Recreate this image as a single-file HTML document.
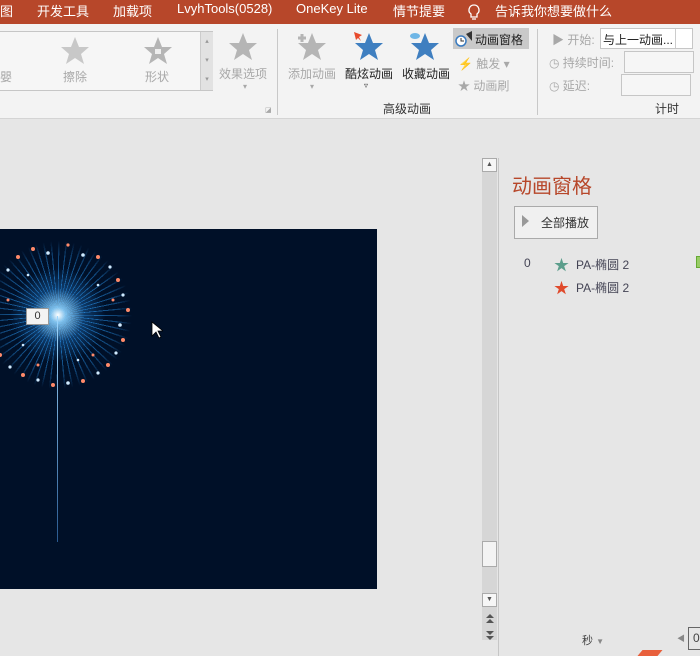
<!DOCTYPE html>
<html><head><meta charset="utf-8"><style>
*{margin:0;padding:0;box-sizing:border-box}
body{width:700px;height:656px;overflow:hidden;background:#e6e6e6;font-family:"Liberation Sans","Noto Sans CJK SC",sans-serif;position:relative;font-size:12px;color:#444}
.a{position:absolute;white-space:nowrap}
#top{position:absolute;left:0;top:0;width:700px;height:24px;background:#b7472a;color:#fff;font-size:13px}
#rib{position:absolute;left:0;top:24px;width:700px;height:95px;background:#f3f3f3;border-bottom:1px solid #d4d4d4}
.g{color:#a8a8a8}
.star{position:absolute;width:30px;height:30px}
.lbl{font-size:12px}
</style></head><body>
<div id="top">
<span class="a" style="left:0;top:1px">图</span>
<span class="a" style="left:37px;top:1px">开发工具</span>
<span class="a" style="left:113px;top:1px">加载项</span>
<span class="a" style="left:177px;top:1px">LvyhTools(0528)</span>
<span class="a" style="left:296px;top:1px">OneKey Lite</span>
<span class="a" style="left:393px;top:1px">情节提要</span>
<svg class="a" style="left:467px;top:3px" width="14" height="18"><path d="M7 2a5 5 0 0 0-3 9v3h6v-3a5 5 0 0 0-3-9z M5 16h4" stroke="#fff" fill="none" stroke-width="1.3"/></svg>
<span class="a" style="left:495px;top:1px">告诉我你想要做什么</span>
</div>
<div id="rib">
<div class="a" style="left:-2px;top:7px;width:215px;height:60px;border:1px solid #c6c6c6;background:#f6f6f6"></div>
<div class="a" style="left:200px;top:8px;width:13px;height:58px;background:#e2e2e2;border-left:1px solid #ccc;font-size:7px;color:#999;text-align:center;line-height:19px">▴<br>▾<br>▾</div>
<svg class="star" style="left:60px;top:12px" viewBox="0 0 30 30"><path d="M15 1l4 10h10l-8 7 3 10-9-6-9 6 3-10-8-7h10z" fill="#c8c8c8"/></svg>
<svg class="star" style="left:143px;top:12px" viewBox="0 0 30 30"><path d="M15 1l4 10h10l-8 7 3 10-9-6-9 6 3-10-8-7h10z" fill="#b5b5b5"/><rect x="12" y="13" width="6" height="5" fill="#eee"/></svg>
<svg class="star" style="left:228px;top:8px" viewBox="0 0 30 30"><path d="M15 1l4 10h10l-8 7 3 10-9-6-9 6 3-10-8-7h10z" fill="#b5b5b5"/></svg>
<span class="a lbl g" style="left:0;top:44px">嬰</span>
<span class="a lbl g" style="left:63px;top:44px">擦除</span>
<span class="a lbl g" style="left:145px;top:44px">形状</span>
<span class="a lbl g" style="left:219px;top:41px">效果选项</span>
<span class="a g" style="left:243px;top:58px;font-size:8px">▾</span>
<div class="a" style="left:277px;top:5px;width:1px;height:86px;background:#c8c8c8"></div>
<svg class="star" style="left:297px;top:8px" viewBox="0 0 30 30"><path d="M15 1l4 10h10l-8 7 3 10-9-6-9 6 3-10-8-7h10z" fill="#b5b5b5"/><path d="M2 2v8M-2 6h8" stroke="#b5b5b5" stroke-width="3" transform="translate(3,0)"/></svg>
<span class="a lbl g" style="left:288px;top:41px">添加动画</span>
<span class="a g" style="left:310px;top:58px;font-size:8px">▾</span>
<svg class="star" style="left:354px;top:8px" viewBox="0 0 30 30"><path d="M15 1l4 10h10l-8 7 3 10-9-6-9 6 3-10-8-7h10z" fill="#3f7fc0"/><path d="M0 0l8 3-3 2 2 4-3-3-2 2z" fill="#e84a2c"/></svg>
<span class="a lbl" style="left:345px;top:41px;color:#222">酷炫动画</span>
<span class="a" style="left:364px;top:57px;font-size:8px;color:#333">▿</span>
<svg class="star" style="left:410px;top:8px" viewBox="0 0 30 30"><path d="M15 1l4 10h10l-8 7 3 10-9-6-9 6 3-10-8-7h10z" fill="#3f7fc0"/><ellipse cx="5" cy="4" rx="5" ry="3" fill="#6fb6e6"/></svg>
<span class="a lbl" style="left:402px;top:41px;color:#222">收藏动画</span>
<div class="a" style="left:453px;top:4px;width:76px;height:21px;background:#c9c9c9"></div>
<svg class="a" style="left:455px;top:6px" width="18" height="17"><circle cx="6" cy="11" r="5" stroke="#3a7bbf" fill="#fff" stroke-width="1.5"/><path d="M6 8v3h3" stroke="#333" fill="none"/><path d="M11 4l6-3v10z" fill="#333"/></svg>
<span class="a lbl" style="left:475px;top:7px;color:#222">动画窗格</span>
<span class="a lbl g" style="left:458px;top:31px">⚡ 触发 ▾</span>
<span class="a lbl g" style="left:458px;top:53px">★ 动画刷</span>
<span class="a lbl" style="left:383px;top:76px;color:#333">高级动画</span>
<div class="a" style="left:537px;top:5px;width:1px;height:86px;background:#c8c8c8"></div>
<span class="a lbl g" style="left:552px;top:7px">▶ 开始:</span>
<div class="a" style="left:600px;top:4px;width:93px;height:21px;border:1px solid #c6c6c6;background:#fff"></div>
<span class="a lbl" style="left:603px;top:7px;color:#222">与上一动画...</span>
<div class="a" style="left:675px;top:5px;width:1px;height:19px;background:#ccc"></div>
<span class="a lbl g" style="left:549px;top:30px">◷ 持续时间:</span>
<div class="a" style="left:624px;top:27px;width:70px;height:22px;border:1px solid #c6c6c6;background:#f6f6f6"></div>
<span class="a lbl g" style="left:549px;top:53px">◷ 延迟:</span>
<div class="a" style="left:621px;top:50px;width:70px;height:22px;border:1px solid #c6c6c6;background:#f6f6f6"></div>
<span class="a lbl" style="left:655px;top:76px;color:#333">计时</span>
<span class="a g" style="left:265px;top:82px;font-size:7px">◪</span>
</div>
<div class="a" style="left:0;top:229px;width:377px;height:360px;background:#001028;overflow:hidden">
<div class="a" style="left:-17px;top:11px;width:150px;height:150px;border-radius:50%;background:repeating-conic-gradient(rgba(40,150,240,.75) 0deg 1.2deg,transparent 1.2deg 6deg);-webkit-mask:radial-gradient(circle,#000 20%,rgba(0,0,0,.5) 55%,transparent 70%)"></div>
<div class="a" style="left:-17px;top:11px;width:150px;height:150px;border-radius:50%;background:radial-gradient(circle,rgba(255,255,255,1) 0,rgba(140,210,255,.9) 7%,rgba(40,140,230,.35) 25%,transparent 45%)"></div>
<svg class="a" style="left:-17px;top:11px" width="150" height="150" viewBox="-75 -75 150 150">
<g fill="#ff8a6a"><circle cx="-40" cy="-58" r="2"/><circle cx="-25" cy="-66" r="2"/><circle cx="10" cy="-70" r="1.6"/><circle cx="40" cy="-58" r="2"/><circle cx="60" cy="-35" r="2"/><circle cx="70" cy="-5" r="2"/><circle cx="65" cy="25" r="2"/><circle cx="50" cy="50" r="2"/><circle cx="25" cy="66" r="2"/><circle cx="-5" cy="70" r="2"/><circle cx="-35" cy="60" r="2"/><circle cx="-58" cy="40" r="2"/><circle cx="-68" cy="5" r="2"/><circle cx="-60" cy="-30" r="2"/><circle cx="55" cy="-15" r="1.5"/><circle cx="35" cy="40" r="1.5"/><circle cx="-20" cy="50" r="1.5"/><circle cx="-50" cy="-15" r="1.5"/></g>
<g fill="#cfeaff"><circle cx="-50" cy="-45" r="1.6"/><circle cx="-10" cy="-62" r="1.8"/><circle cx="25" cy="-60" r="1.8"/><circle cx="52" cy="-48" r="1.6"/><circle cx="65" cy="-20" r="1.6"/><circle cx="62" cy="10" r="1.8"/><circle cx="58" cy="38" r="1.6"/><circle cx="40" cy="58" r="1.6"/><circle cx="10" cy="68" r="1.8"/><circle cx="-20" cy="65" r="1.6"/><circle cx="-48" cy="52" r="1.6"/><circle cx="-65" cy="22" r="1.6"/><circle cx="-66" cy="-12" r="1.6"/><circle cx="40" cy="-30" r="1.3"/><circle cx="-35" cy="30" r="1.3"/><circle cx="20" cy="45" r="1.3"/><circle cx="-30" cy="-40" r="1.3"/></g>
</svg>
<div class="a" style="left:57px;top:87px;width:1px;height:226px;background:linear-gradient(#9fd8ff,#2a5a90)"></div>
<div class="a" style="left:26px;top:79px;width:23px;height:17px;background:#f3f3f3;border:1px solid #999;font-size:11px;color:#333;text-align:center;line-height:15px">0</div>
<svg class="a" style="left:151px;top:92px" width="12" height="18"><path d="M1 1v14l4-4 3 6 2-1-3-6h5z" fill="#fff" stroke="#000" stroke-width=".8"/></svg>
</div>
<div class="a" style="left:482px;top:158px;width:15px;height:482px;background:#d6d6d6"></div>
<div class="a" style="left:482px;top:158px;width:15px;height:14px;background:#f6f6f6;border:1px solid #aaa;font-size:7px;text-align:center;line-height:12px;color:#555">▲</div>
<div class="a" style="left:482px;top:541px;width:15px;height:26px;background:#f3f3f3;border:1px solid #aaa"></div>
<div class="a" style="left:482px;top:593px;width:15px;height:14px;background:#f6f6f6;border:1px solid #aaa;font-size:7px;text-align:center;line-height:12px;color:#555">▼</div>
<svg class="a" style="left:485px;top:613px" width="10" height="28"><path d="M1 5l4-4 4 4zM1 10l4-4 4 4zM1 18l4 4 4-4zM1 23l4 4 4-4z" fill="#555"/></svg>
<div class="a" style="left:498px;top:158px;width:1px;height:498px;background:#c6c6c6"></div>
<span class="a" style="left:512px;top:170px;font-size:20px;color:#b7472a">动画窗格</span>
<div class="a" style="left:514px;top:206px;width:84px;height:33px;border:1px solid #aaa;background:#f0f0f0"></div>
<svg class="a" style="left:522px;top:215px" width="8" height="12"><path d="M0 0l7 6-7 6z" fill="#999"/></svg>
<span class="a" style="left:541px;top:214px;font-size:12px;color:#333">全部播放</span>
<span class="a" style="left:524px;top:256px;font-size:12px;color:#445">0</span>
<span class="a" style="left:554px;top:254px;font-size:15px;color:#5c9e8c">★</span>
<span class="a" style="left:576px;top:256px;font-size:12px;color:#445">PA-椭圆 2</span>
<span class="a" style="left:554px;top:277px;font-size:15px;color:#e04a2c">★</span>
<span class="a" style="left:576px;top:279px;font-size:12px;color:#445">PA-椭圆 2</span>
<div class="a" style="left:696px;top:256px;width:6px;height:12px;background:#9c6;border:1px solid #6a3"></div>
<span class="a" style="left:582px;top:632px;font-size:11px;color:#444">秒 <span style="color:#888;font-size:8px">▼</span></span>
<span class="a" style="left:677px;top:633px;font-size:8px;color:#888">◀</span>
<div class="a" style="left:688px;top:627px;width:20px;height:23px;border:1px solid #666;font-size:12px;padding-left:4px;line-height:21px">0</div>
<div class="a" style="left:640px;top:650px;width:20px;height:6px;background:#e8603c;transform:skewX(-40deg)"></div>
</body></html>
